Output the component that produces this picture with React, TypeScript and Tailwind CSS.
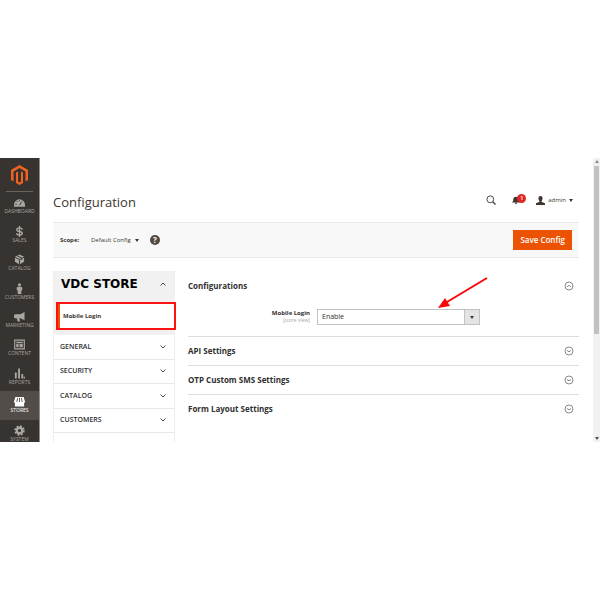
import type { ReactNode } from 'react'

const navItems: { label: string; active?: boolean; icon: ReactNode }[] = [
    {
        label: 'Dashboard',
        icon: (
            <>
                <path d="M0 21v-4a12 12 0 0 1 24 0v4z" />
                <path d="M12 18l5-8M3 16h3M6 9l2 2M12 7v2" stroke="#373330" strokeWidth="2" />
            </>
        ),
    },
    {
        label: 'Sales',
        icon: (
            <path
                d="M18 8c0-3-3-4-6-4s-6 1-6 4 3 3.500 6 4 6 1.500 6 4-3 4-6 4-6-1-6-4M12 0v24"
                fill="none"
                stroke="currentColor"
                strokeWidth="3"
            />
        ),
    },
    {
        label: 'Catalog',
        icon: (
            <>
                <path d="M12 1l10 5v11l-10 6-10-6V6z" />
                <path d="M2 7l10 5 10-5M12 12v11M7 4l10 5v4" fill="none" stroke="#373330" strokeWidth="2" />
            </>
        ),
    },
    {
        label: 'Customers',
        icon: (
            <>
                <circle cx="12" cy="4" r="3.500" />
                <path d="M8 8h8l2 2v6h-2v8H8v-8H6v-6z" />
            </>
        ),
    },
    {
        label: 'Marketing',
        icon: <path d="M23 2v18l-9-4h-2l1 7H8l-2-7H4a4 4 0 0 1 0-9h10z" />,
    },
    {
        label: 'Content',
        icon: (
            <>
                <path d="M1.500 2.500h21v19h-21z" fill="none" stroke="currentColor" strokeWidth="2.500" />
                <path d="M5 6h14v3H5zM5 11h5v7H5zM12 11h7v7h-7z" />
            </>
        ),
    },
    {
        label: 'Reports',
        icon: <path d="M2 10h4v13H2zM9 1h4v22H9zM16 13h4v10h-4zM21 19h3v4h-3z" />,
    },
    {
        label: 'Stores',
        active: true,
        icon: (
            <>
                <path d="M3 2h18l3 10a3 3 0 0 1-2 3v8H2v-8a3 3 0 0 1-2-3z" />
                <path d="M8 4L6 13M12 4v9M16 4l2 9" fill="none" stroke="#524d49" strokeWidth="2" />
            </>
        ),
    },
    {
        label: 'System',
        icon: (
            <>
                <circle cx="12" cy="12" r="6" fill="none" stroke="currentColor" strokeWidth="5" />
                <circle cx="12" cy="12" r="9.500" fill="none" stroke="currentColor" strokeWidth="4" strokeDasharray="4 3.460" />
            </>
        ),
    },
]

const menuItems = ['General', 'Security', 'Catalog', 'Customers']
const sections = ['API Settings', 'OTP Custom SMS Settings', 'Form Layout Settings']

function Chevron({ up = false }: { up?: boolean }) {
    return (
        <svg viewBox="0 0 8 8" className="size-2 shrink-0" fill="none" stroke="#514943" aria-hidden="true">
            <path d={up ? 'M1.500 5.500l2.500-2.500 2.500 2.500' : 'M1.500 2.500l2.500 2.500 2.500-2.500'} />
        </svg>
    )
}

function CircleChevron({ up = false }: { up?: boolean }) {
    return (
        <svg viewBox="0 0 10 10" className="size-2.5 shrink-0" fill="none" stroke="#6f6964" strokeWidth="0.800" aria-hidden="true">
            <circle cx="5" cy="5" r="4" />
            <path d={up ? 'M3 5.800l2-1.500 2 1.500' : 'M3 4.400l2 1.500 2-1.500'} />
        </svg>
    )
}

function Caret() {
    return (
        <svg viewBox="0 0 4 3" className="h-[3px] w-1" fill="#41362f" aria-hidden="true">
            <path d="M0 0h4L2 3z" />
        </svg>
    )
}

function Sidebar() {
    return (
        <aside className="w-10 shrink-0 border-r border-[#8f8c89] bg-[#373330] text-[#aaa6a0]">
            <a href="#" aria-label="Home" className="mx-1.5 flex h-[34px] items-center justify-center border-b border-[#6b625c]">
                <svg viewBox="0 0 34 40" className="h-5 w-[17px]" fill="#f26322">
                    <path d="M17 0l17 10v20l-5 3V13L17 6 5 13v20l-5-3V10z" />
                    <path d="M10 15l4-2v20l3 2 3-2V13l4 2v21l-7 4-7-4z" />
                </svg>
            </a>
            <nav className="grid h-[256px] auto-rows-fr">
                {navItems.map((item) => (
                    <a
                        key={item.label}
                        href="#"
                        className={
                            item.active
                                ? 'flex flex-col items-center justify-center bg-[#524d49] pb-px text-white'
                                : 'flex flex-col items-center justify-center pb-px'
                        }
                    >
                        <svg viewBox="0 0 24 24" className="size-[11px]" fill="currentColor" aria-hidden="true">
                            {item.icon}
                        </svg>
                        <span className="text-[5px] leading-[6px] uppercase">{item.label}</span>
                    </a>
                ))}
            </nav>
        </aside>
    )
}

function Header() {
    return (
        <header className="flex pt-8">
            <h1 className="flex-1 text-[13px] leading-6">Configuration</h1>
            <div className="flex h-5 items-center">
                <button aria-label="Search" className="mr-4">
                    <svg viewBox="0 0 10 10" className="size-2.5" fill="none" stroke="#514943">
                        <circle cx="4.300" cy="4.300" r="3.400" />
                        <path d="M6.800 6.800l2.700 2.700" strokeWidth="1.500" />
                    </svg>
                </button>
                <button aria-label="Notifications" className="relative mr-2.5 w-3.5">
                    <svg viewBox="0 0 10 10" className="size-2" fill="#41362f">
                        <path d="M0 8l1.500-2V4A3.500 3.500 0 0 1 5 1a3.500 3.500 0 0 1 3.500 3v2L10 8zM4 8.500h2V10H4z" />
                    </svg>
                    <span className="absolute -top-0.5 right-0 size-[9px] rounded-full bg-[#e22626] text-center text-[6px] leading-[9px] font-semibold text-white">
                        1
                    </span>
                </button>
                <button className="mr-1.5 flex items-center gap-[3px] text-[6px]">
                    <svg viewBox="0 0 20 20" className="size-[9px]" fill="#41362f" aria-hidden="true">
                        <path d="M10 0c3 0 4.500 2 4.500 5S13 11 12 12v1l8 3v4H0v-4l8-3v-1c-1-1-2.500-4-2.500-7S7 0 10 0z" />
                    </svg>
                    admin
                    <Caret />
                </button>
            </div>
        </header>
    )
}

function ScopeBar() {
    return (
        <div className="mt-2 flex h-9 items-center border-y border-[#e8e8e8] bg-[#f8f8f8] pr-[7px] pl-[7px] text-[6px]">
            <span className="w-[31px] font-bold">Scope:</span>
            <button className="flex items-center gap-1">
                Default Config
                <Caret />
            </button>
            <a
                href="#"
                aria-label="Help"
                className="ml-[11px] size-2.5 rounded-full bg-[#514943] text-center text-[8px] leading-[10px] font-bold text-white"
            >
                ?
            </a>
            <button className="ml-auto h-5 bg-[#eb5202] px-[7px] text-[8px] font-semibold text-white">Save Config</button>
        </div>
    )
}

function ConfigMenu() {
    return (
        <div className="h-[171px] w-[122px] shrink-0 border-x border-[#eeeeee]">
            <button className="flex h-[26px] w-full items-center justify-between bg-[#f1f1f1] pr-[7px] pl-[7px]">
                <span className="font-['DejaVu_Sans',sans-serif] text-[12px] font-bold text-black">VDC STORE</span>
                <Chevron up />
            </button>
            <div className="bg-[#f1f1f1] pt-[5px] pb-[5px]">
                <a
                    href="#"
                    className="-mr-0.5 ml-0.5 flex h-7 items-center border-2 border-[#fb1313] bg-white text-[6px] font-bold"
                >
                    <span className="mr-[3px] w-0.5 self-stretch bg-[#eb5202]" />
                    Mobile Login
                </a>
            </div>
            <div className="grid h-[98px] auto-rows-fr">
                {menuItems.map((item) => (
                    <button
                        key={item}
                        className="flex items-center justify-between border-b border-[#e8e8e8] pr-[7px] pl-1.5 text-[7px] font-semibold text-[#303030] uppercase"
                    >
                        {item}
                        <Chevron />
                    </button>
                ))}
            </div>
        </div>
    )
}

function Settings() {
    return (
        <div className="min-w-0 flex-1 text-[8px] font-bold text-[#303030]">
            <section className="h-[66px] border-b border-[#dddddd]">
                <button className="flex h-[30px] w-full items-center justify-between pr-[5px]">
                    Configurations
                    <CircleChevron up />
                </button>
                <div className="relative mt-2 flex items-center">
                    <label htmlFor="mobile-login" className="mr-[7px] w-[122px] text-right text-[6px] leading-[7px]">
                        Mobile Login
                        <span className="block text-[5px] font-normal text-[#a8a4a0]">[store view]</span>
                    </label>
                    <div className="relative w-[163px]">
                        <select
                            id="mobile-login"
                            defaultValue="Enable"
                            className="block h-4 w-full appearance-none border border-[#c2c2c2] bg-white pl-1 text-[7px] font-normal"
                        >
                            <option>Enable</option>
                            <option>Disable</option>
                        </select>
                        <span className="pointer-events-none absolute inset-y-0 right-0 flex w-4 items-center justify-center border border-[#c2c2c2] bg-[#e3e3e3]">
                            <Caret />
                        </span>
                    </div>
                    <svg viewBox="0 0 50 32" className="absolute bottom-4 left-[250px] h-8 w-[50px]" fill="#fb0606" aria-hidden="true">
                        <path d="M49 1L9 25" stroke="#fb0606" strokeWidth="2" />
                        <path d="M0 31l7-10 5 8z" />
                    </svg>
                </div>
            </section>
            {sections.map((section) => (
                <section key={section} className="border-b border-[#dddddd] last:border-0">
                    <button className="flex h-7 w-full items-center justify-between pr-[5px]">
                        {section}
                        <CircleChevron />
                    </button>
                </section>
            ))}
        </div>
    )
}

export default function App() {
    return (
        <div className="flex min-h-screen items-center bg-white font-['Open_Sans',sans-serif] text-[#41362f]">
            <div className="flex h-[284px] w-full overflow-hidden">
                <Sidebar />
                <main className="min-w-0 flex-1 pr-3.5 pl-[13px]">
                    <Header />
                    <ScopeBar />
                    <div className="mt-[13px] flex gap-[13px]">
                        <ConfigMenu />
                        <Settings />
                    </div>
                </main>
                <div className="flex w-[7px] shrink-0 flex-col items-center bg-[#f1f1f1] py-0.5" aria-hidden="true">
                    <svg viewBox="0 0 4 3" className="mb-[3px] h-[3px] w-1 shrink-0 rotate-180" fill="#8a8a8a">
                        <path d="M0 0h4L2 3z" />
                    </svg>
                    <div className="h-[168px] w-[5px] bg-[#c1c1c1]" />
                    <svg viewBox="0 0 4 3" className="mt-auto h-[3px] w-1 shrink-0" fill="#505050">
                        <path d="M0 0h4L2 3z" />
                    </svg>
                </div>
            </div>
        </div>
    )
}
